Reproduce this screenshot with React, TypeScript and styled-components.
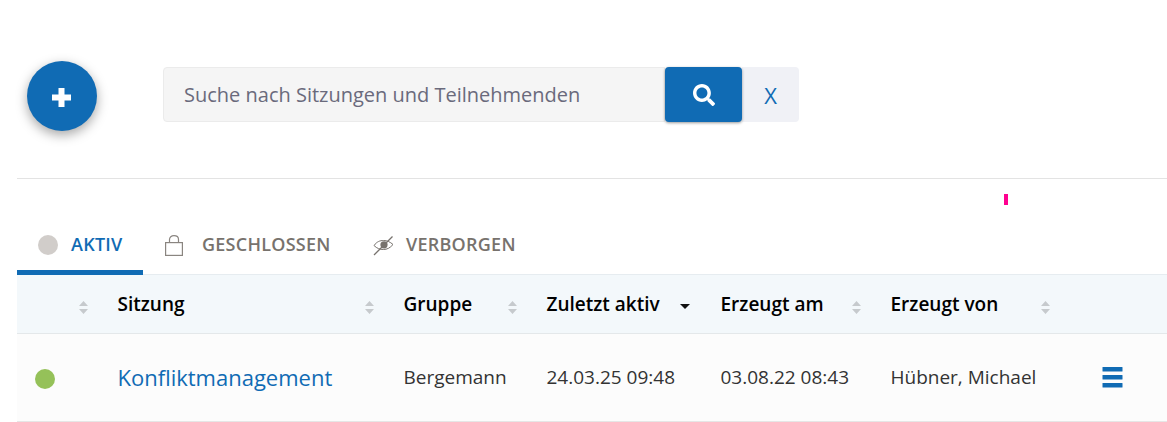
import React from 'react';
import styled, { createGlobalStyle } from 'styled-components';
import { FaSearch } from 'react-icons/fa';

const GlobalStyle = createGlobalStyle`
  html, body {
    margin: 0;
    padding: 0;
    background: #fff;
    font-family: "Open Sans", "Liberation Sans", sans-serif;
  }
`;

const Page = styled.div`
  position: relative;
  width: 1167px;
  height: 422px;
  overflow: hidden;
  padding-left: 17px;
  box-sizing: border-box;
`;

const Toolbar = styled.div`
  height: 179px;
  box-sizing: border-box;
  border-bottom: 1px solid #e3e3e3;
  padding: 61px 0 0 10px;
  display: flex;
  align-items: flex-start;
`;

const AddButton = styled.button`
  width: 70px;
  height: 70px;
  border: 0;
  border-radius: 50%;
  background: #106bb4;
  box-shadow: 0 4px 12px rgba(0, 0, 0, 0.35);
  display: flex;
  align-items: center;
  justify-content: center;
  padding: 3px 1px 0 0;
`;

const SearchGroup = styled.div`
  margin: 6px 0 0 66px;
  display: flex;
  height: 55px;
`;

const SearchInput = styled.div`
  width: 502px;
  box-sizing: border-box;
  background: #f5f5f5;
  border: 1px solid #ebebeb;
  border-radius: 4px 0 0 4px;
  padding-left: 20px;
  display: flex;
  align-items: center;
  font-size: 20px;
  color: #6a6a7c;
`;

const SearchButton = styled.button`
  width: 77px;
  border: 0;
  border-radius: 4px;
  background: #106bb4;
  color: #fff;
  box-shadow: 0 1px 3px rgba(0, 0, 0, 0.4);
  display: flex;
  align-items: center;
  justify-content: center;
  font-size: 22px;
  padding: 0;
  position: relative;
`;

const ClearButton = styled.button`
  width: 57px;
  border: 0;
  border-radius: 0 4px 4px 0;
  background: #f0f1f6;
  color: #106bb4;
  font-family: inherit;
  font-size: 22px;
  padding: 0;
`;

const Marker = styled.div`
  position: absolute;
  left: 1004px;
  top: 194px;
  width: 4px;
  height: 11px;
  background: #ff0090;
`;

const Tabs = styled.div`
  margin-top: 41px;
  height: 55px;
  display: flex;
  box-sizing: border-box;
  border-bottom: 1px solid #e6ecf0;
`;

const Tab = styled.div<{ $active?: boolean; $width: number; $pad: number; $gap: number }>`
  width: ${(p) => p.$width}px;
  box-sizing: border-box;
  height: 55px;
  padding: 0 0 ${(p) => (p.$active ? 0 : 5)}px ${(p) => p.$pad}px;
  display: flex;
  align-items: center;
  gap: ${(p) => p.$gap}px;
  font-size: 18px;
  font-weight: 600;
  letter-spacing: 0.25px;
  color: ${(p) => (p.$active ? '#106bb4' : '#77726d')};
  border-bottom: ${(p) => (p.$active ? '5px solid #106bb4' : '0')};
`;

const TabLabel = styled.span`
  position: relative;
  top: -1px;
`;

const StatusDot = styled.span<{ $color: string; $size: number; $drop?: number }>`
  width: ${(p) => p.$size}px;
  height: ${(p) => p.$size}px;
  border-radius: 50%;
  background: ${(p) => p.$color};
  display: block;
  flex: none;
  margin-top: ${(p) => p.$drop ?? 0}px;
`;

const Grid = styled.div`
  display: grid;
  grid-template-columns: 101px 286px 143px 174px 170px 189px 87px;
`;

const HeaderRow = styled(Grid)`
  height: 59px;
  box-sizing: border-box;
  background: #f3f8fb;
  border-bottom: 1px solid #e4e8ea;
`;

const HeaderCell = styled.div<{ $end?: boolean }>`
  display: flex;
  align-items: center;
  justify-content: ${(p) => (p.$end ? 'flex-end' : 'space-between')};
  padding-right: 30px;
  font-size: 19px;
  font-weight: 600;
  color: #000;
`;

const HeaderLabel = styled.span`
  position: relative;
  left: -0.5px;
`;

const BodyRow = styled(Grid)`
  height: 88px;
  box-sizing: border-box;
  background: #fcfcfc;
  border-bottom: 1px solid #e6e6e6;
`;

const BodyCell = styled.div<{ $inset?: number }>`
  display: flex;
  align-items: center;
  padding-left: ${(p) => p.$inset ?? 0}px;
  font-size: 19px;
  color: #333;
`;

const BodyText = styled.span`
  position: relative;
  top: -1px;
  left: -0.5px;
`;

const SessionLink = styled.a`
  font-size: 22px;
  color: #106bb4;
  text-decoration: none;
`;

const SortGlyph = styled.svg`
  margin-top: 6px;
  flex: none;
`;

const CaretGlyph = styled.svg`
  margin: 5px 1px 0 0;
  flex: none;
`;

const SortIcon = () => (
  <SortGlyph width="9" height="13" viewBox="0 0 9 13">
    <path d="M4.5 0 L9 5 H0 Z M0 8 H9 L4.5 13 Z" fill="#c6cacd" />
  </SortGlyph>
);

const SortDown = () => (
  <CaretGlyph width="10" height="5" viewBox="0 0 10 5">
    <path d="M0 0 H10 L5 5 Z" fill="#111" />
  </CaretGlyph>
);

const PlusIcon = () => (
  <svg width="19" height="19" viewBox="0 0 19 19">
    <path d="M6.5 0 H12.5 V6.5 H19 V12.5 H12.5 V19 H6.5 V12.5 H0 V6.5 H6.5 Z" fill="#fff" />
  </svg>
);

const LockIcon = () => (
  <svg width="18" height="21" viewBox="0 0 18 21" fill="none" stroke="#8a8580" strokeWidth="1.2">
    <rect x="0.6" y="7.6" width="16.8" height="12.8" />
    <path d="M4.5 7.5 V4.5 C4.5 2 6.4 0.7 9 0.7 C11.6 0.7 13.5 2 13.5 4.5 V7.5" />
  </svg>
);

const EyeOffIcon = () => (
  <svg width="21" height="21" viewBox="0 0 21 21" fill="none" stroke="#77726d">
    <path d="M1 10.5 C4 6.5 7 5.5 10.5 5.5 C14 5.5 17 6.8 20 9.5 C17 13 14 14.5 10.5 14.5 C7 14.5 4 13.5 1 10.5 Z" strokeWidth="1" />
    <circle cx="11" cy="9.8" r="3.6" fill="#77726d" stroke="none" />
    <path d="M1 20 L19.5 1.5" strokeWidth="1.2" />
  </svg>
);

const MenuIcon = () => (
  <svg width="21" height="21" viewBox="0 0 21 21">
    <rect x="0.5" y="0" width="20" height="4.6" rx="0.6" fill="#106bb4" />
    <rect x="0.5" y="8" width="20" height="4.6" rx="0.6" fill="#106bb4" />
    <rect x="0.5" y="16" width="20" height="4.6" rx="0.6" fill="#106bb4" />
  </svg>
);

const App: React.FC = () => {
  return (
    <Page>
      <GlobalStyle />
      <Toolbar>
        <AddButton aria-label="Neu">
          <PlusIcon />
        </AddButton>
        <SearchGroup>
          <SearchInput>Suche nach Sitzungen und Teilnehmenden</SearchInput>
          <SearchButton aria-label="Suchen">
            <FaSearch />
          </SearchButton>
          <ClearButton>X</ClearButton>
        </SearchGroup>
      </Toolbar>
      <Marker />

      <Tabs>
        <Tab $active $width={126} $pad={21} $gap={13}>
          <StatusDot $color="#d1cdca" $size={20} />
          <TabLabel>AKTIV</TabLabel>
        </Tab>
        <Tab $width={212} $pad={22} $gap={19}>
          <LockIcon />
          <TabLabel>GESCHLOSSEN</TabLabel>
        </Tab>
        <Tab $width={200} $pad={18} $gap={12}>
          <EyeOffIcon />
          <TabLabel>VERBORGEN</TabLabel>
        </Tab>
      </Tabs>

      <HeaderRow>
        <HeaderCell $end>
          <SortIcon />
        </HeaderCell>
        <HeaderCell>
          <HeaderLabel>Sitzung</HeaderLabel>
          <SortIcon />
        </HeaderCell>
        <HeaderCell>
          <HeaderLabel>Gruppe</HeaderLabel>
          <SortIcon />
        </HeaderCell>
        <HeaderCell>
          <HeaderLabel>Zuletzt aktiv</HeaderLabel>
          <SortDown />
        </HeaderCell>
        <HeaderCell>
          <HeaderLabel>Erzeugt am</HeaderLabel>
          <SortIcon />
        </HeaderCell>
        <HeaderCell>
          <HeaderLabel>Erzeugt von</HeaderLabel>
          <SortIcon />
        </HeaderCell>
        <HeaderCell />
      </HeaderRow>

      <BodyRow>
        <BodyCell $inset={18}>
          <StatusDot $color="#95c159" $size={20} $drop={2} />
        </BodyCell>
        <BodyCell>
          <BodyText>
            <SessionLink>Konfliktmanagement</SessionLink>
          </BodyText>
        </BodyCell>
        <BodyCell>
          <BodyText>Bergemann</BodyText>
        </BodyCell>
        <BodyCell>
          <BodyText>24.03.25 09:48</BodyText>
        </BodyCell>
        <BodyCell>
          <BodyText>03.08.22 08:43</BodyText>
        </BodyCell>
        <BodyCell>
          <BodyText>Hübner, Michael</BodyText>
        </BodyCell>
        <BodyCell $inset={22}>
          <MenuIcon />
        </BodyCell>
      </BodyRow>
    </Page>
  );
};

export default App;
